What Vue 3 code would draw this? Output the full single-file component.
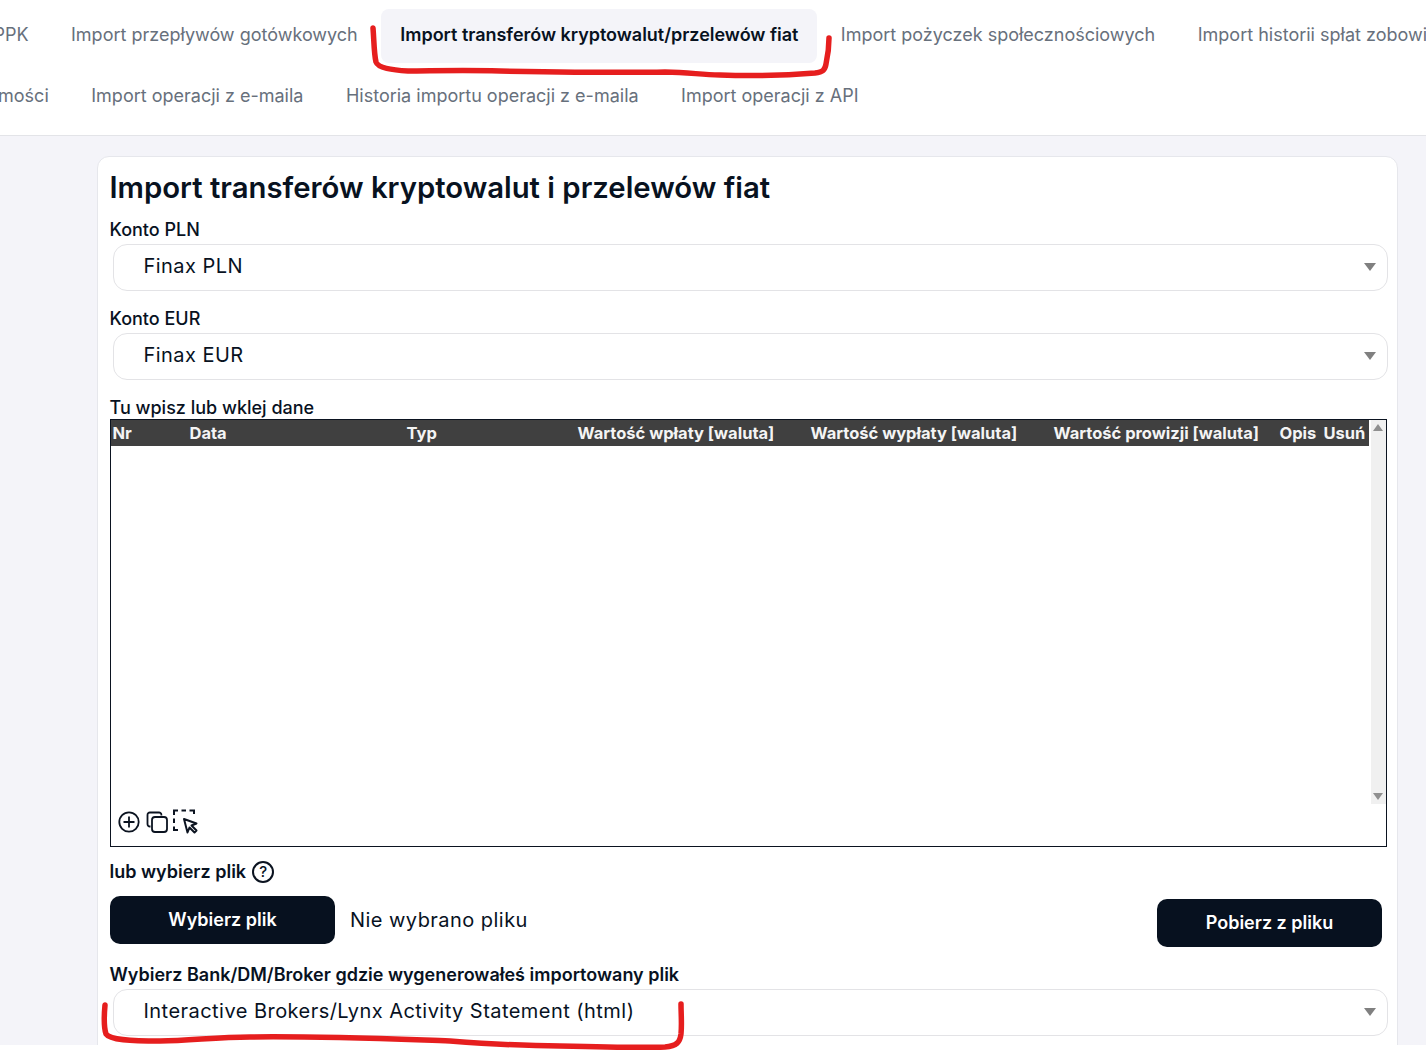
<script setup>
const topTabs = [
  { label: "Import PPK" },
  { label: "Import przepływów gotówkowych" },
  { label: "Import transferów kryptowalut/przelewów fiat", active: true },
  { label: "Import pożyczek społecznościowych" },
  { label: "Import historii spłat zobowiązań" }
]
const bottomTabs = [
  "Import nieruchomości",
  "Import operacji z e-maila",
  "Historia importu operacji z e-maila",
  "Import operacji z API"
]
const columns = [
  "Nr",
  "Data",
  "Typ",
  "Wartość wpłaty [waluta]",
  "Wartość wypłaty [waluta]",
  "Wartość prowizji [waluta]",
  "Opis",
  "Usuń"
]
</script>

<template>
  <div class="page">
    <nav class="tabs">
      <div class="tab-row first">
        <a v-for="tab in topTabs" :key="tab.label" class="tab" :class="{ active: tab.active }">{{ tab.label }}</a>
      </div>
      <div class="tab-row second">
        <a v-for="tab in bottomTabs" :key="tab" class="tab">{{ tab }}</a>
      </div>
    </nav>

    <main class="content">
      <section class="card">
        <h1>Import transferów kryptowalut i przelewów fiat</h1>

        <label class="field-label">Konto PLN</label>
        <div class="select"><span>Finax PLN</span><i class="caret"></i></div>

        <label class="field-label next">Konto EUR</label>
        <div class="select"><span>Finax EUR</span><i class="caret"></i></div>

        <label class="field-label table-label">Tu wpisz lub wklej dane</label>
        <div class="sheet">
          <div class="sheet-main">
            <div class="sheet-grid">
              <div class="sheet-head">
                <span v-for="col in columns" :key="col">{{ col }}</span>
              </div>
            </div>
            <div class="scrollbar">
              <i class="arrow up"></i>
              <i class="arrow down"></i>
            </div>
          </div>
          <div class="sheet-tools">
            <svg width="22" height="22" viewBox="0 0 22 22" fill="none" stroke="#0b1320" stroke-width="1.8">
              <circle cx="11" cy="11" r="9.7" />
              <path d="M11 5.5v11M5.5 11h11" />
            </svg>
            <svg width="22" height="22" viewBox="0 0 22 22" fill="none" stroke="#0b1320" stroke-width="1.8">
              <path d="M4.500 15.500h-.6A2.400 2.400 0 0 1 1.500 13V3.900a2.400 2.400 0 0 1 2.400-2.400H13a2.400 2.400 0 0 1 2.400 2.400v.6" />
              <rect x="6" y="6" width="15" height="15" rx="3" />
            </svg>
            <svg width="25" height="25" viewBox="0 0 25 25" fill="none" stroke="#0b1320" stroke-width="2">
              <path d="M1 6V1.500h4M8.500 1.500h4.500M16.500 1.500h4.500V5M1 9.500v4.500M1 17.500v3.500h4" />
              <path d="M11 10l12.500 4.500-5 2 5 5-2 2-5-5-2 5z" stroke-linejoin="round" />
            </svg>
          </div>
        </div>

        <div class="file-label">
          <span>lub wybierz plik</span>
          <span class="help">?</span>
        </div>
        <div class="file-row">
          <button class="dark-btn">Wybierz plik</button>
          <span class="no-file">Nie wybrano pliku</span>
          <button class="dark-btn fetch">Pobierz z pliku</button>
        </div>

        <label class="field-label broker">Wybierz Bank/DM/Broker gdzie wygenerowałeś importowany plik</label>
        <div class="select"><span>Interactive Brokers/Lynx Activity Statement (html)</span><i class="caret"></i></div>
      </section>
    </main>

    <svg class="scribble" width="1426" height="1051" viewBox="0 0 1426 1051" fill="none" stroke="#e61e1e" stroke-width="5.500" stroke-linecap="round" stroke-linejoin="round">
      <path d="M373 28C374 40 374 54 376 62C378 68 392 70 408 71C430 71 460 70 500 71C560 72 620 73 665 72C690 72 700 75 720 75C750 76 790 75 815 73C823 72 825 70 826 64C828 55 829 46 829 38" />
      <path d="M105 1005C104 1016 104 1028 106 1034C110 1040 130 1041 160 1041C190 1041 215 1037 250 1037C320 1036 390 1039 450 1041C490 1044 520 1046 560 1046C600 1047 640 1048 665 1047C677 1046 680 1042 681 1034C682 1024 681 1014 681 1004" />
    </svg>
  </div>
</template>

<style scoped>
.page {
  position: relative;
  height: 1051px;
  overflow: hidden;
  background: linear-gradient(#f4f4f9 1045px, #fff 1045px);
  font-family: Inter, "Noto Sans", sans-serif;
  color: #08121f;
}

.tabs {
  height: 136px;
  padding-top: 9px;
  box-sizing: border-box;
  background: #fff;
  border-bottom: 1px solid #e3e4e8;
  overflow: hidden;
}

.tab-row {
  display: flex;
  gap: 4.5px;
  white-space: nowrap;
  width: max-content;
}

.tab-row.first {
  margin-left: -86px;
}

.tab-row.second {
  margin-left: -156px;
  margin-top: 7px;
}

.tab {
  height: 54px;
  padding: 0 19px;
  font-size: 18px;
  line-height: 52px;
  color: #67707c;
  border-radius: 8px;
}

.tab.active {
  background: #f4f4f9;
  color: #08121f;
  font-weight: 600;
  letter-spacing: -0.02px;
}

.content {
  height: 909px;
  overflow: hidden;
  padding: 20px 29px 0 97px;
  box-sizing: border-box;
}

.card {
  background: #fff;
  border: 1px solid #e6e7ec;
  border-radius: 12px;
  padding: 12px 9px 20px 12px;
  box-sizing: border-box;
  width: 1301px;
}

h1 {
  margin: 0 0 0 -0.5px;
  font-size: 29.3px;
  line-height: 38px;
  font-weight: 600;
}

.field-label {
  display: block;
  margin: 10px 0 -1px -0.5px;
  padding-top: 1px;
  font-size: 18px;
  line-height: 24px;
  font-weight: 550;
}

.field-label.next {
  margin-top: 15px;
}

.field-label.table-label {
  margin-top: 15px;
}

.field-label.broker {
  margin-top: 18px;
  font-weight: 600;
}

.select {
  display: flex;
  align-items: center;
  justify-content: space-between;
  height: 47px;
  box-sizing: border-box;
  margin: 3px 0 0 3px;
  padding: 0 11px 4px 29.5px;
  border: 1px solid #e3e3e6;
  border-radius: 14px;
  font-size: 20px;
  letter-spacing: 0.46px;
  background: #fff;
}

.caret {
  width: 0;
  height: 0;
  margin-top: 2px;
  border-left: 6.5px solid transparent;
  border-right: 6.5px solid transparent;
  border-top: 8px solid #808080;
}

.sheet {
  height: 428px;
  box-sizing: border-box;
  width: 1277px;
  border: 1px solid #0b1320;
  display: flex;
  flex-direction: column;
}

.sheet-main {
  display: flex;
  height: 384px;
}

.sheet-grid {
  flex: 1;
}

.sheet-head {
  display: grid;
  grid-template-columns: 77px 217px 171px 233px 243px 226px 44px 45px;
  height: 26px;
  padding-left: 1.5px;
  background: #404040;
  color: #f4f4f4;
  font-size: 16.5px;
  line-height: 27px;
  font-weight: 700;
  white-space: nowrap;
}

.scrollbar {
  position: relative;
  width: 15px;
  margin-left: 2px;
  background: #f0f0f0;
}

.arrow {
  position: absolute;
  left: 2px;
  width: 0;
  height: 0;
  border-left: 5.5px solid transparent;
  border-right: 5.5px solid transparent;
}

.arrow.up {
  top: 4px;
  border-bottom: 7px solid #8f8f8f;
}

.arrow.down {
  bottom: 4px;
  border-top: 7px solid #8f8f8f;
}

.sheet-tools {
  display: flex;
  align-items: flex-start;
  gap: 6px;
  padding: 7px 0 0 7px;
}

.sheet-tools svg:last-child {
  margin-top: -2px;
}

.sheet-tools svg:nth-child(2) {
  margin-right: -1px;
}

.file-label {
  display: flex;
  align-items: center;
  gap: 6px;
  margin-top: 13px;
  margin-left: -0.5px;
  font-size: 18px;
  line-height: 24px;
  font-weight: 600;
}

.help {
  display: inline-flex;
  align-items: center;
  justify-content: center;
  width: 22px;
  height: 22px;
  box-sizing: border-box;
  border: 2px solid #0b1320;
  border-radius: 50%;
  font-size: 15px;
  font-weight: 500;
}

.file-row {
  display: flex;
  align-items: center;
  margin-top: 12px;
  height: 48px;
}

.dark-btn {
  width: 225px;
  height: 48px;
  border: none;
  border-radius: 10px;
  background: #07111f;
  color: #fff;
  font-family: inherit;
  font-size: 18px;
  font-weight: 600;
  padding: 0 0 2px;
}

.no-file {
  margin-left: 15px;
  font-size: 20px;
  letter-spacing: 0.46px;
}

.dark-btn.fetch {
  margin-left: auto;
  margin-right: 6px;
  transform: translateY(3px);
}

.scribble {
  position: absolute;
  left: 0;
  top: 0;
  pointer-events: none;
}
</style>

<style>
html, body {
  background: #fff;
}
</style>
